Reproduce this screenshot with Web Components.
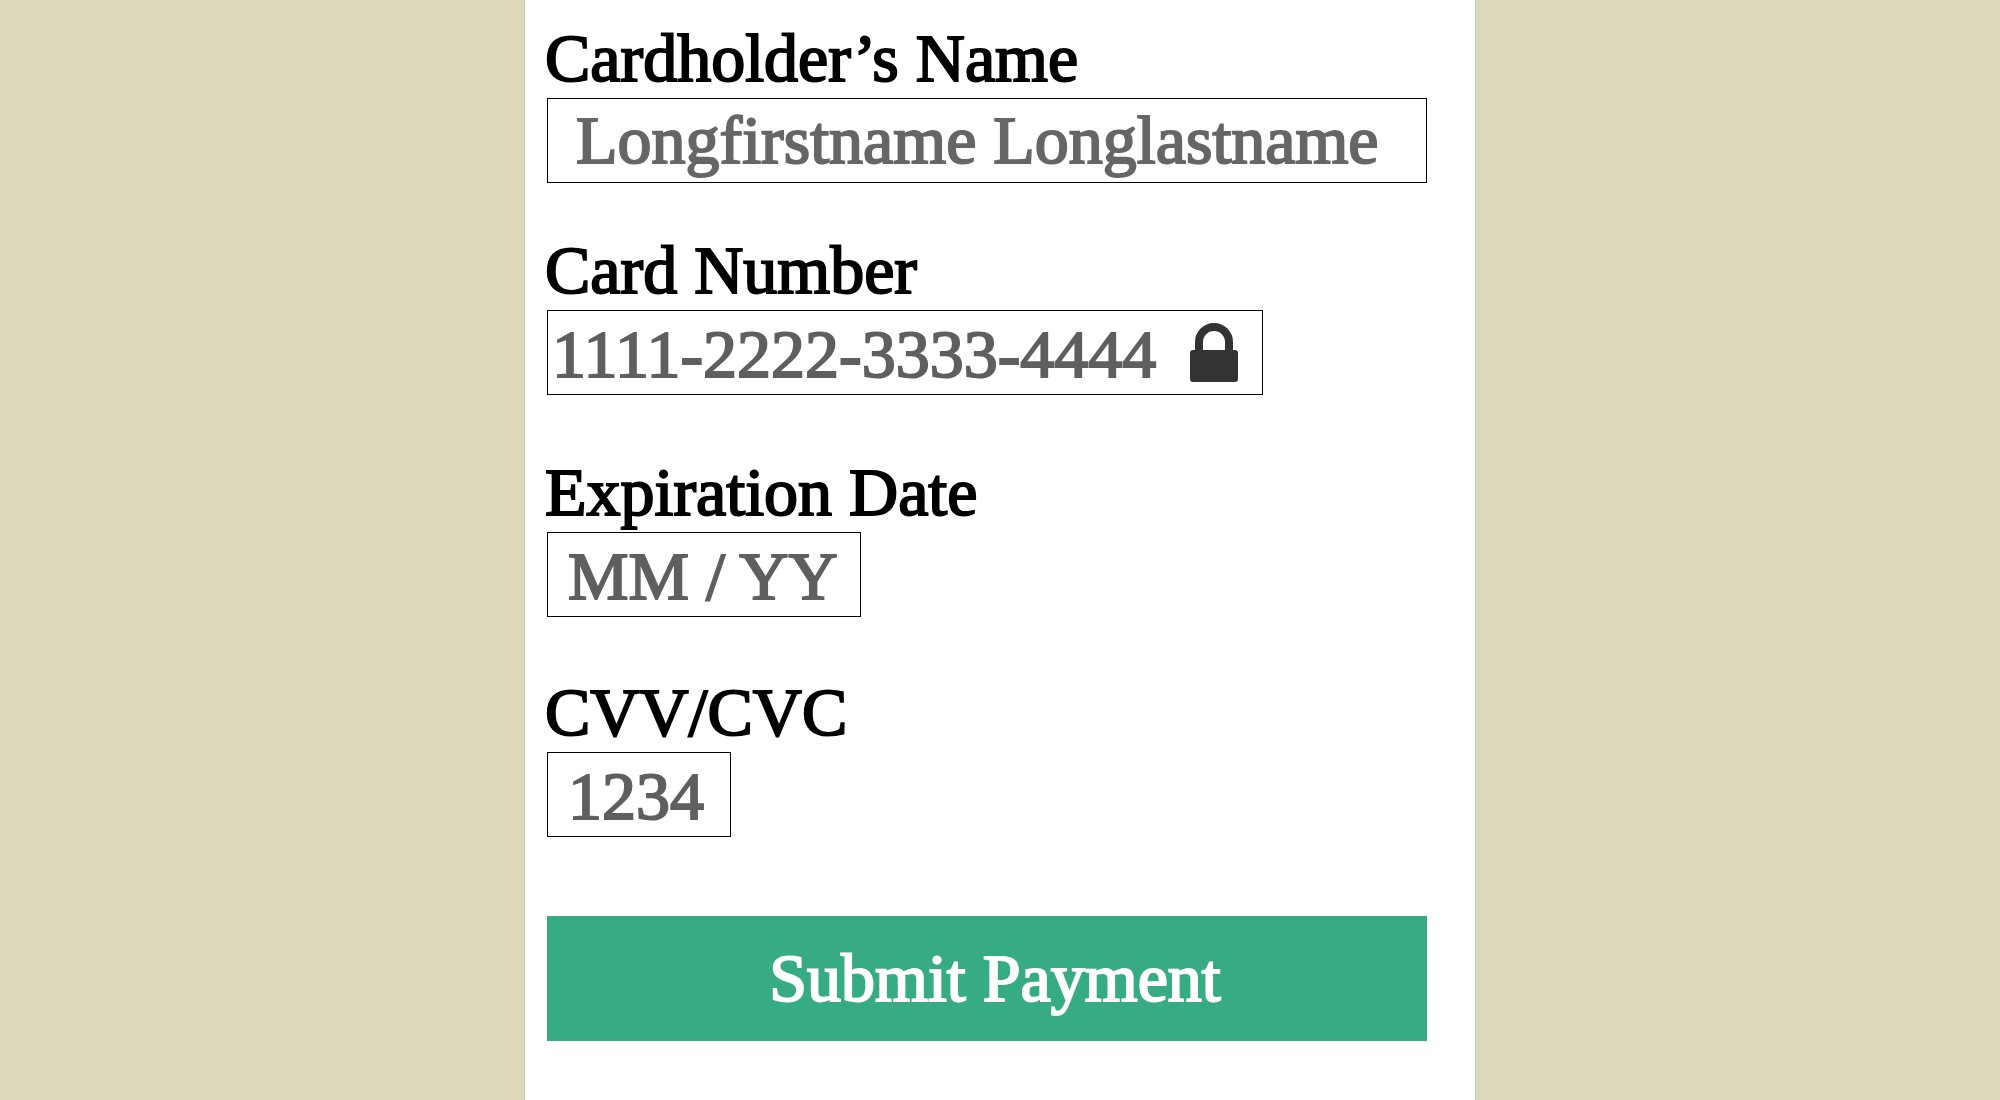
<!DOCTYPE html>
<html lang="en">
<head>
<meta charset="utf-8">
<title>Payment</title>
<style>
  html { min-height: 100%; background: #ddd9bc; }
  body { margin: 0; font-family: "Liberation Serif", "Times New Roman", serif; }
</style>
</head>
<body>
<payment-form>
  <payment-field name="cc-name" label="Cardholder’s Name" placeholder="Longfirstname Longlastname" size="full"></payment-field>
  <payment-field name="cc-number" label="Card Number" placeholder="1111-2222-3333-4444" size="number"><lock-icon></lock-icon></payment-field>
  <payment-field name="cc-exp" label="Expiration Date" placeholder="MM / YY" size="date"></payment-field>
  <payment-field name="cc-csc" label="CVV/CVC" placeholder="1234" size="code"></payment-field>
  <submit-button>Submit Payment</submit-button>
</payment-form>

<script>
class PaymentForm extends HTMLElement {
  constructor() {
    super();
    this.attachShadow({ mode: "open" }).innerHTML = `
      <style>
        :host { display: flex; justify-content: center; min-height: 100vh; }
        main {
          box-sizing: border-box;
          width: 100%;
          max-width: 952px;
          padding: 18px 48px 48px 22px;
          background: #fff;
          border: solid #d6d3c6;
          border-width: 0 1px;
        }
        form { display: flex; flex-direction: column; font-size: 68px; }
        ::slotted([size="number"]) { margin-top: 47px; }
        ::slotted([size="date"]) { margin-top: 57px; }
        ::slotted([size="code"]) { margin-top: 55px; }
        ::slotted(submit-button) { margin-top: 79px; }
      </style>
      <main><form><slot></slot></form></main>`;
  }
}

class PaymentField extends HTMLElement {
  constructor() {
    super();
    this.attachShadow({ mode: "open" }).innerHTML = `
      <style>
        :host { display: block; --indent: 20px; --drop: 4px; --tone: #5f5f5f; --width: 100%; }
        :host([size="full"]) { --indent: 28px; --drop: 0px; --tone: #666; }
        :host([size="number"]) { --indent: 4px; --width: 716px; }
        :host([size="date"]) { --width: 314px; }
        :host([size="code"]) { --width: 184px; }
        label {
          display: block;
          margin-left: -2px;
          line-height: 80px;
          color: #000;
          -webkit-text-stroke: 2px currentColor;
        }
        .box {
          display: flex;
          align-items: center;
          box-sizing: border-box;
          width: var(--width);
          max-width: 100%;
          height: 85px;
          border: 1px solid #000;
          background: #fff;
        }
        .box:focus-within { outline: 2px solid #37ab84; }
        input {
          flex: 1;
          min-width: 0;
          height: 100%;
          box-sizing: border-box;
          margin: 0;
          padding: var(--drop) 0 0 var(--indent);
          border: 0;
          outline: 0;
          background: none;
          font: inherit;
          font-variant-ligatures: none;
          color: var(--tone);
          -webkit-text-stroke: 2px currentColor;
        }
        input::placeholder { color: var(--tone); opacity: 1; }
      </style>
      <label for="control"></label>
      <div class="box"><input id="control" type="text"><slot></slot></div>`;
  }
  connectedCallback() {
    const input = this.shadowRoot.querySelector("input");
    this.shadowRoot.querySelector("label").textContent = this.getAttribute("label");
    input.placeholder = this.getAttribute("placeholder");
    input.autocomplete = this.getAttribute("name");
  }
}

class LockIcon extends HTMLElement {
  constructor() {
    super();
    this.attachShadow({ mode: "open" }).innerHTML = `
      <style>
        :host { display: block; flex: none; margin-right: 24px; }
        svg { display: block; }
      </style>
      <svg width="48" height="59" viewBox="0 0 48 59" aria-hidden="true">
        <path d="M9 30V19a15 15 0 0 1 30 0V30" fill="none" stroke="#333" stroke-width="8"/>
        <rect y="27" width="48" height="32" rx="3" fill="#333"/>
      </svg>`;
  }
}

class SubmitButton extends HTMLElement {
  constructor() {
    super();
    this.attachShadow({ mode: "open" }).innerHTML = `
      <style>
        :host { display: block; }
        button {
          display: block;
          box-sizing: border-box;
          width: 100%;
          height: 125px;
          margin: 0;
          padding: 0 0 0 16px;
          border: 0;
          background: #37ab84;
          color: #fff;
          font: inherit;
          -webkit-text-stroke: 2px currentColor;
          cursor: pointer;
        }
      </style>
      <button type="button"><slot></slot></button>`;
  }
}

customElements.define("payment-form", PaymentForm);
customElements.define("payment-field", PaymentField);
customElements.define("lock-icon", LockIcon);
customElements.define("submit-button", SubmitButton);
</script>
</body>
</html>
